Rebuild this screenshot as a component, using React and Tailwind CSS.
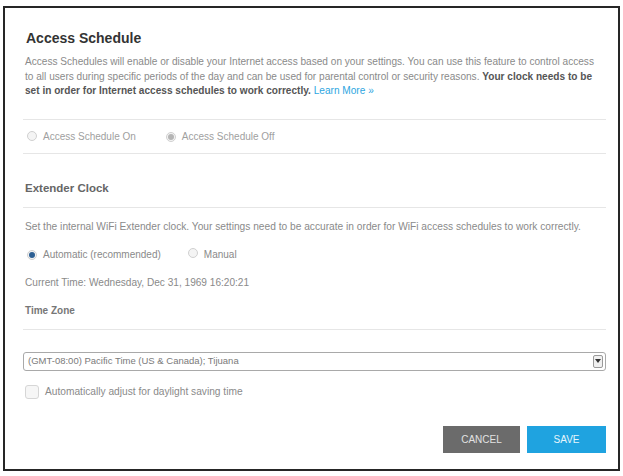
import React from "react";

const font = { fontFamily: '"Liberation Sans", Arial, sans-serif' };

function Radio({ checked, tone = "gray" }) {
  const dot = tone === "blue" ? "bg-[#2d5f93]" : "bg-[#b5b5b5]";
  return (
    <span className="inline-flex h-[10px] w-[10px] items-center justify-center rounded-full border border-[#d0d0d0] bg-[#f4f4f4]">
      {checked && <span className={`h-[6px] w-[6px] rounded-full ${dot}`} />}
    </span>
  );
}

function Divider() {
  return <div className="h-px w-full bg-[#e6e6e6]" />;
}

export default function App() {
  return (
    <div className="min-h-screen bg-white pl-[3px] pt-[6px]" style={font}>
      <div className="h-[465px] w-[617px] border-2 border-[#262626] bg-white pl-[18px] pr-[12px]">
        {/* Header */}
        <h1 className="mt-[21px] pl-[3px] text-[14px] font-bold leading-[18px] text-[#333]">
          Access Schedule
        </h1>
        <div className="mt-[8px] pl-[2px] text-[10.1px] leading-[14.5px] text-[#8a8a8a]">
          <p className="whitespace-nowrap">
            Access Schedules will enable or disable your Internet access based on your settings. You can use this feature to control access
          </p>
          <p className="whitespace-nowrap">
            to all users during specific periods of the day and can be used for parental control or security reasons.{" "}
            <span className="font-bold text-[#555]">Your clock needs to be</span>
          </p>
          <p className="whitespace-nowrap">
            <span className="font-bold text-[#555]">
              set in order for Internet access schedules to work correctly.
            </span>{" "}
            <span className="text-[#2ea6df]">Learn More »</span>
          </p>
        </div>

        <div className="mt-[20px]">
          <Divider />
        </div>
        <div className="flex h-[33px] items-center pl-[4px] text-[10px] text-[#a0a0a0]">
          <Radio />
          <span className="ml-[6px]">Access Schedule On</span>
          <span className="ml-[30px]">
            <Radio checked />
          </span>
          <span className="ml-[6px]">Access Schedule Off</span>
        </div>
        <Divider />

        {/* Clock settings */}
        <h2 className="mt-[26px] pl-[2px] text-[11.5px] font-bold leading-[16px] text-[#666]">
          Extender Clock
        </h2>
        <div className="mt-[11px]">
          <Divider />
        </div>
        <p className="mt-[12px] whitespace-nowrap pl-[2px] text-[10.2px] leading-[14px] text-[#8a8a8a]">
          Set the internal WiFi Extender clock. Your settings need to be accurate in order for WiFi access schedules to work correctly.
        </p>
        <div className="mt-[13px] flex h-[16px] items-center pl-[4px] text-[10px] text-[#8a8a8a]">
          <Radio checked tone="blue" />
          <span className="ml-[6px]">Automatic (recommended)</span>
          <span className="ml-[27px]">
            <Radio />
          </span>
          <span className="ml-[6px]">Manual</span>
        </div>
        <p className="mt-[13px] pl-[2px] text-[10.1px] leading-[14px] text-[#8a8a8a]">
          Current Time: Wednesday, Dec 31, 1969 16:20:21
        </p>
        <p className="mt-[14px] pl-[2px] text-[10px] font-bold leading-[14px] text-[#777]">
          Time Zone
        </p>
        <div className="mt-[11px]">
          <Divider />
        </div>

        {/* Time zone select */}
        <div className="mt-[22px] flex h-[19px] items-center justify-between rounded-[3px] border border-[#a9a9a9] bg-white pl-[4px] pr-[2px]">
          <span className="text-[9.5px] text-[#7a7a7a]">
            (GMT-08:00) Pacific Time (US &amp; Canada); Tijuana
          </span>
          <span className="flex h-[13px] w-[10px] items-center justify-center rounded-[2px] border border-[#9a9a9a] bg-[#f0f0f0]">
            <svg width="6" height="4" viewBox="0 0 6 4">
              <path d="M0 0h6L3 4z" fill="#333" />
            </svg>
          </span>
        </div>
        <div className="mt-[13px] flex h-[16px] items-center pl-[2px] text-[10.2px] text-[#8a8a8a]">
          <span className="h-[14px] w-[14px] rounded-[3px] border border-[#d6d6d6] bg-[#f6f6f6]" />
          <span className="ml-[6px]">Automatically adjust for daylight saving time</span>
        </div>

        {/* Actions */}
        <div className="mt-[26px] flex justify-end gap-[7px]">
          <button className="h-[27px] w-[77px] bg-[#6b6b6b] text-[10px] text-[#e2e2e2]">
            CANCEL
          </button>
          <button className="h-[27px] w-[79px] bg-[#1fa3e0] text-[10px] text-[#e6f5fc]">
            SAVE
          </button>
        </div>
      </div>
    </div>
  );
}
